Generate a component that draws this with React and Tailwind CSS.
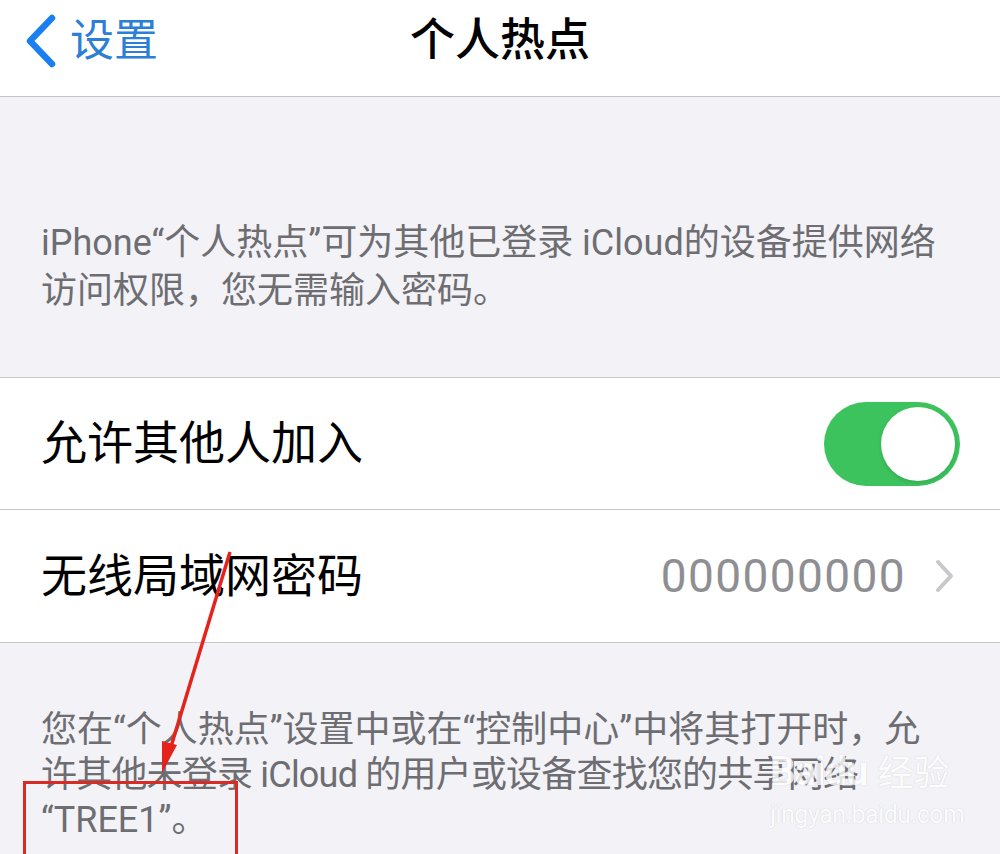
import React from 'react';

const cjk = { fontFamily: 'Roboto, "Noto Sans CJK SC", sans-serif' };

const Toggle = () => (
  <div className="w-[136px] h-[84px] rounded-full bg-[#3cc35d] p-[5px] flex justify-end">
    <div className="w-[74px] h-[74px] rounded-full bg-white shadow-[0_2px_4px_rgba(0,0,0,0.12)]" />
  </div>
);

const Chevron = () => (
  <svg width="22" height="34" viewBox="0 0 22 34" fill="none">
    <path d="M4 3 L17 17 L4 31" stroke="#c7c7cc" strokeWidth="4" strokeLinecap="round" strokeLinejoin="round" />
  </svg>
);

export default function App() {
  return (
    <div className="relative w-[1000px] h-[854px] overflow-hidden bg-[#f2f2f7]" style={cjk}>
      {/* nav bar */}
      <div className="h-[97px] bg-white border-b border-[#c6c6c9] grid grid-cols-[1fr_auto_1fr] items-start pt-[13px]">
        <div className="flex items-center gap-[12px] pl-[24px]">
          <svg width="34" height="54" viewBox="0 0 34 54" fill="none">
            <path d="M28 4 L6 27 L28 50" stroke="#1a7ff0" strokeWidth="6.5" strokeLinecap="round" strokeLinejoin="round" />
          </svg>
          <span className="text-[44px] leading-[56px] text-[#2b7fd6]">设置</span>
        </div>
        <div className="text-[45px] leading-[56px] font-medium text-black">个人热点</div>
        <div />
      </div>

      {/* header note */}
      <div className="pt-[122px] pb-[62px] pl-[41px] text-[36px] leading-[48px] text-[#6d6d72]">
        <div className="whitespace-nowrap">iPhone“个人热点”可为其他已登录 iCloud的设备提供网络</div>
        <div className="whitespace-nowrap">访问权限，您无需输入密码。</div>
      </div>

      {/* cells */}
      <div className="bg-white border-y border-[#c8c7cc]">
        <div className="h-[132px] flex items-center justify-between pl-[41px] pr-[40px] border-b border-[#c8c7cc]">
          <span className="text-[46px] text-black">允许其他人加入</span>
          <Toggle />
        </div>
        <div className="h-[132px] flex items-center justify-between pl-[41px] pr-[44px]">
          <span className="text-[46px] text-black">无线局域网密码</span>
          <div className="flex items-center gap-[28px]">
            <span className="text-[46px] tracking-[1.4px] text-[#8e8e93]" style={{ fontFamily: 'Roboto, sans-serif' }}>000000000</span>
            <Chevron />
          </div>
        </div>
      </div>

      {/* footer note */}
      <div className="pt-[65px] pl-[41px] text-[36px] leading-[45px] text-[#6d6d72]">
        <div className="whitespace-nowrap">您在“个人热点”设置中或在“控制中心”中将其打开时，允</div>
        <div className="whitespace-nowrap tracking-[-0.8px]">许其他未登录 iCloud 的用户或设备查找您的共享网络</div>
        <div className="whitespace-nowrap">“TREE1”。</div>
      </div>

      {/* watermark */}
      <div className="absolute left-[770px] top-[752px] flex flex-col items-start text-white [text-shadow:0_0_1px_rgba(160,160,170,0.7)] opacity-80">
        <div className="flex items-end">
          <span className="text-[40px] font-bold leading-none tracking-[-1px]" style={{ fontFamily: 'Roboto, sans-serif' }}>Baidu</span>
          <span className="text-[36px] leading-none ml-[10px]">经验</span>
        </div>
        <span className="text-[25px] leading-[34px] mt-[6px] tracking-[-0.5px]" style={{ fontFamily: 'Roboto, sans-serif' }}>jingyan.baidu.com</span>
      </div>

      {/* annotation */}
      <svg className="absolute left-0 top-0" width="1000" height="854" viewBox="0 0 1000 854" fill="none">
        <line x1="230" y1="552" x2="170" y2="750" stroke="#e3231c" strokeWidth="3.5" />
        <path d="M162 773 L162 741 L177 745 Z" fill="#e3231c" />
      </svg>
      <div className="absolute left-[23px] top-[781px] w-[215px] h-[80px] border-[3px] border-[#d92b25]" />
    </div>
  );
}
